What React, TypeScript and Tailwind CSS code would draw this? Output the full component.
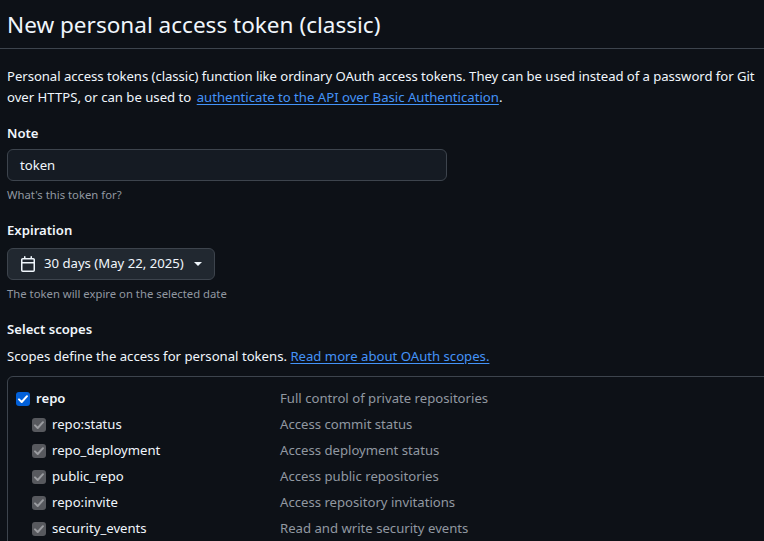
const scopes = [
  { name: "repo:status", desc: "Access commit status" },
  { name: "repo_deployment", desc: "Access deployment status" },
  { name: "public_repo", desc: "Access public repositories" },
  { name: "repo:invite", desc: "Access repository invitations" },
  { name: "security_events", desc: "Read and write security events" },
]

function CheckMark({ className }: { className: string }) {
  return (
    <svg viewBox="0 0 14 14" className={className} fill="none">
      <path d="M3 7.4 5.7 10 11 4.2" stroke="currentColor" strokeWidth="2" strokeLinecap="round" strokeLinejoin="round" />
    </svg>
  )
}

export default function App() {
  return (
    <div className="w-[764px] h-[541px] overflow-hidden bg-[#0d1117] text-[#f0f6fc] text-[13.15px] font-['Noto_Sans',sans-serif]">
      <div className="h-[49px] pl-[7px] border-b border-[#3d444d]">
        <h1 className="text-[22.55px] leading-[50px]">New personal access token (classic)</h1>
      </div>
      <div className="pl-[7px]">
        <p className="mt-[17px] leading-[21px] whitespace-nowrap">
          <span className="tracking-[-0.05px]">
            Personal access tokens (classic) function like ordinary OAuth access tokens. They can be used instead of a password for Git
          </span>
          <br />
          over HTTPS, or can be used to{" "}
          <a className="ml-0.5 text-[#4493f8] underline underline-offset-2">authenticate to the API over Basic Authentication</a>.
        </p>
        <div className="mt-[15px] font-semibold leading-5">Note</div>
        <div className="mt-1.5 w-[440px] h-8 flex items-center px-3 pt-0.5 bg-[#151b23] border border-[#3d444d] rounded-md">token</div>
        <p className="mt-[7px] text-[11.3px] leading-[14px] text-[#9198a1]">What's this token for?</p>
        <div className="mt-[18px] font-semibold leading-5">Expiration</div>
        <div className="mt-2 w-52 h-8 flex items-center gap-2 px-3 bg-[#212830] border border-[#3d444d] rounded-md whitespace-nowrap">
          <svg viewBox="0 0 16 16" className="w-4 h-4 shrink-0 fill-[#f0f6fc]">
            <path d="M4.75 0a.75.75 0 0 1 .75.75V2h5V.75a.75.75 0 0 1 1.5 0V2h1.25c.966 0 1.75.784 1.75 1.75v10.5A1.75 1.75 0 0 1 13.25 16H2.75A1.75 1.75 0 0 1 1 14.25V3.75C1 2.784 1.784 2 2.75 2H4V.75A.75.75 0 0 1 4.75 0ZM2.5 7.5v6.75c0 .138.112.25.25.25h10.5a.25.25 0 0 0 .25-.25V7.5Zm10.75-4H2.75a.25.25 0 0 0-.25.25V6h11V3.75a.25.25 0 0 0-.25-.25Z" />
          </svg>
          <span>30 days (May 22, 2025)</span>
          <span className="ml-0.5 border-x-4 border-t-4 border-x-transparent border-t-[#f0f6fc]" />
        </div>
        <p className="mt-[7px] text-[11.3px] leading-[14px] text-[#9198a1]">The token will expire on the selected date</p>
        <div className="mt-[18px] font-semibold leading-5">Select scopes</div>
        <p className="mt-[7px] leading-5">
          Scopes define the access for personal tokens.{" "}
          <a className="text-[#4493f8] underline underline-offset-2">Read more about OAuth scopes.</a>
        </p>
        <div className="mt-[10px] w-[800px] h-[300px] pl-2 pt-[9px] border border-[#3d444d] rounded-md">
          <div className="flex items-center h-[26px]">
            <span className="w-[14px] h-[14px] flex items-center justify-center rounded-[3px] bg-[#0260d8] text-white">
              <CheckMark className="w-[14px] h-[14px]" />
            </span>
            <span className="ml-[6px] w-[244px] font-semibold">repo</span>
            <span className="text-[#9198a1]">Full control of private repositories</span>
          </div>
          {scopes.map((s) => (
            <div key={s.name} className="flex items-center h-[26px]">
              <span className="ml-4 w-[14px] h-[14px] flex items-center justify-center rounded-[3px] bg-[#57595e] text-[#9a9ca0]">
                <CheckMark className="w-[14px] h-[14px]" />
              </span>
              <span className="ml-[6px] w-[228px]">{s.name}</span>
              <span className="text-[#9198a1]">{s.desc}</span>
            </div>
          ))}
        </div>
      </div>
    </div>
  )
}
